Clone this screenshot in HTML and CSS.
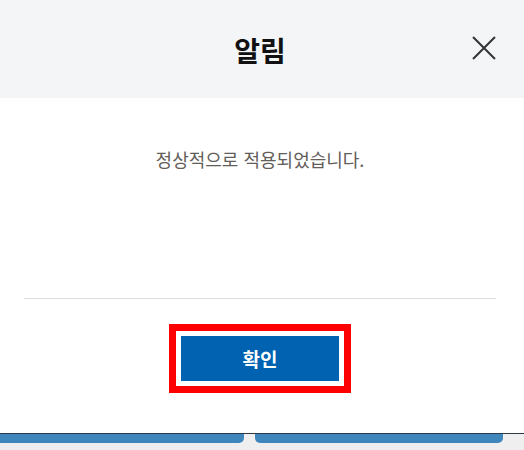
FILE: index.html
```html
<!DOCTYPE html>
<html lang="ko">
<head>
  <meta charset="UTF-8">
  <meta name="viewport" content="width=device-width, initial-scale=1.0">
  <title>알림</title>
  <link rel="stylesheet" href="styles.css">
</head>
<body>
  <div class="modal">
    <div class="modal-head">
      <h1>알림</h1>
      <div class="close-btn">
        <svg width="24" height="24" viewBox="0 0 24 24">
          <path d="M1 1L23 23M23 1L1 23" stroke="#333" stroke-width="2" fill="none"/>
        </svg>
      </div>
    </div>
    <div class="modal-body">
      <p>정상적으로 적용되었습니다.</p>
    </div>
    <div class="modal-foot">
      <button class="ok-btn">확인</button>
    </div>
  </div>
  <div class="page-bar">
    <div class="tab left"></div>
    <div class="tab right"></div>
  </div>
</body>
</html>
```
FILE: styles.css
```css
*{
  margin: 0;
  padding: 0;
  box-sizing: border-box;
}
html{
  background-color: #efefef;
}
body{
  font-family: "Noto Sans CJK KR", "Noto Sans", sans-serif;
}
.modal{
  background-color: #fff;
}
.modal-head{
  position: relative;
  height: 98px;
  padding-right: 4px;
  background-color: #f4f5f7;
  display: flex;
  align-items: center;
  justify-content: center;
}
.modal-head h1{
  font-size: 28px;
  font-weight: 700;
  color: #111;
  line-height: 1;
  margin-top: 2px;
}
.close-btn{
  position: absolute;
  right: 28px;
  top: 36px;
  width: 24px;
  height: 24px;
  cursor: pointer;
}
.modal-body{
  height: 201px;
  padding-top: 49px;
  margin: 0 28px 0 24px;
  border-bottom: 1px solid #dedede;
}
.modal-body p{
  text-align: center;
  font-size: 18px;
  line-height: 24px;
  color: #625d59;
}
.modal-foot{
  height: 134px;
  padding-top: 37px;
  padding-right: 4px;
  display: flex;
  justify-content: center;
}
.ok-btn{
  width: 158px;
  height: 45px;
  border: none;
  background-color: #0062b1;
  color: #fff;
  font-family: inherit;
  font-size: 19px;
  font-weight: 700;
  outline: 7px solid #f00;
  outline-offset: 5px;
  cursor: pointer;
}
.page-bar{
  border-top: 1px solid #2b3949;
  display: flex;
  gap: 11px;
}
.tab{
  height: 9px;
  background-color: #3e86bc;
  border-radius: 0 0 5px 5px;
}
.tab.left{
  width: 244px;
  border-bottom-left-radius: 0;
}
.tab.right{
  width: 248px;
}
```
